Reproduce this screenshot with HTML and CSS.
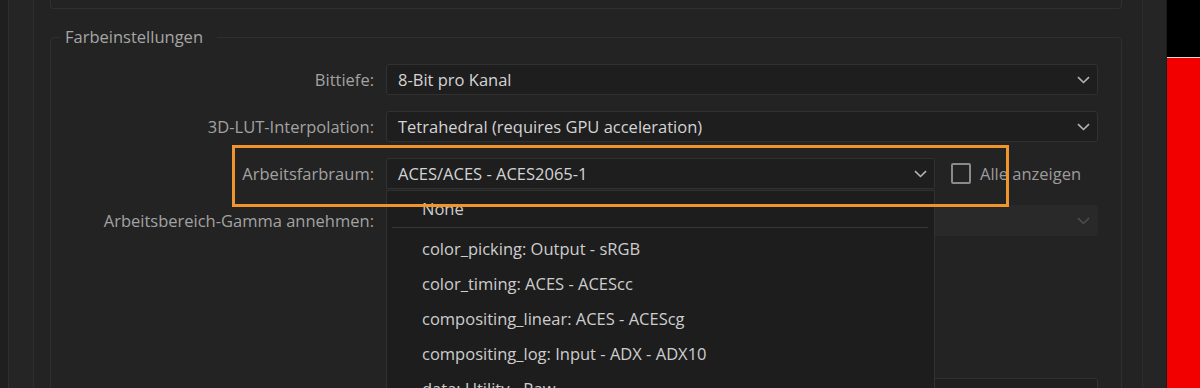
FILE: index.html
```html
<!DOCTYPE html>
<html lang="de">
<head>
<meta charset="utf-8">
<title>Farbeinstellungen</title>
<link rel="stylesheet" href="styles.css">
</head>
<body>
<div class="app">
  <div class="main">
    <div class="panel-outer">
      <div class="panel-inner">
        <div class="topbox"></div>
        <fieldset class="group">
          <legend class="legend">Farbeinstellungen</legend>
          <div class="row row-first">
            <span class="lbl">Bittiefe:</span>
            <div class="select">
              <span class="val">8-Bit pro Kanal</span>
              <svg class="chev" width="13" height="8" viewBox="0 0 13 8"><path d="M1 1.2l5.5 5.3 5.5-5.3" fill="none" stroke="#b4b4b4" stroke-width="1.6"/></svg>
            </div>
          </div>
          <div class="row">
            <span class="lbl">3D-LUT-Interpolation:</span>
            <div class="select">
              <span class="val">Tetrahedral (requires GPU acceleration)</span>
              <svg class="chev" width="13" height="8" viewBox="0 0 13 8"><path d="M1 1.2l5.5 5.3 5.5-5.3" fill="none" stroke="#b4b4b4" stroke-width="1.6"/></svg>
            </div>
          </div>
          <div class="row row-active">
            <span class="lbl">Arbeitsfarbraum:</span>
            <div class="ctrl">
              <div class="select select-open">
                <span class="val">ACES/ACES - ACES2065-1</span>
                <svg class="chev" width="13" height="8" viewBox="0 0 13 8"><path d="M1 1.2l5.5 5.3 5.5-5.3" fill="none" stroke="#b4b4b4" stroke-width="1.6"/></svg>
                <ul class="menu">
                  <li class="item">None</li>
                  <li class="sep"></li>
                  <li class="item">color_picking: Output - sRGB</li>
                  <li class="item">color_timing: ACES - ACEScc</li>
                  <li class="item">compositing_linear: ACES - ACEScg</li>
                  <li class="item">compositing_log: Input - ADX - ADX10</li>
                  <li class="item">data: Utility - Raw</li>
                </ul>
              </div>
              <label class="check"><span class="box"></span><span class="check-text">Alle anzeigen</span></label>
            </div>
            <div class="highlight"></div>
          </div>
          <div class="row">
            <span class="lbl">Arbeitsbereich-Gamma annehmen:</span>
            <div class="select select-disabled">
              <span class="val"></span>
              <svg class="chev" width="13" height="8" viewBox="0 0 13 8"><path d="M1 1.2l5.5 5.3 5.5-5.3" fill="none" stroke="#4c4c4c" stroke-width="1.6"/></svg>
            </div>
          </div>
          <div class="row row-last">
            <span class="lbl">Eingabe-Farbraum:</span>
            <div class="select">
              <span class="val"></span>
            </div>
          </div>
        </fieldset>
      </div>
    </div>
  </div>
  <div class="side">
    <div class="side-black"></div>
    <div class="side-red"></div>
  </div>
</div>
</body>
</html>
```

FILE: styles.css
```css
* { box-sizing: border-box; }
html, body {
  margin: 0;
  padding: 0;
  width: 1200px;
  height: 388px;
  overflow: hidden;
  background: #232323;
  font-family: "Open Sans", "Noto Sans", sans-serif;
  font-size: 16.5px;
}
.app {
  display: flex;
  width: 1200px;
  height: 388px;
  overflow: hidden;
}
.main {
  width: 1167px;
  height: 388px;
  background: #1f1f1f;
  padding-left: 8px;
  display: flex;
}
.panel-outer {
  width: 1159px;
  height: 388px;
  background: #252525;
  border-left: 1px solid #2f2f2f;
  border-right: 1px solid #1b1b1b;
  padding-left: 24px;
  display: flex;
}
.panel-inner {
  width: 1110px;
  height: 388px;
  background: #232323;
  border-left: 1px solid #2e2e2e;
  border-right: 1px solid #2c2c2c;
  padding: 0 20px 0 16px;
  display: flex;
  flex-direction: column;
  overflow: hidden;
}
.topbox {
  height: 9px;
  flex: none;
  border: 1px solid #303030;
  border-top: none;
  border-radius: 0 0 4px 4px;
}
.group {
  margin: 18px 0 0 0;
  padding: 0 23px 0 0;
  border: 1px solid #2f2f2f;
  border-radius: 4px;
  min-width: 0;
  flex: none;
  display: flex;
  flex-direction: column;
  gap: 16px;
}
.legend {
  margin-left: 9px;
  padding: 0 14px 0 5px;
  font-size: 16.5px;
  line-height: 20px;
  color: #a6a6a6;
}
.row {
  position: relative;
  display: grid;
  grid-template-columns: 323px 1fr;
  column-gap: 12px;
  align-items: center;
  height: 31px;
}
.row-first { margin-top: 17px; }
.row-last { margin-top: 126px; }
.lbl {
  text-align: right;
  color: #a2a2a2;
  white-space: nowrap;
}
.select {
  position: relative;
  height: 31px;
  background: #1e1e1e;
  border: 1px solid #313131;
  border-radius: 3px;
  display: flex;
  align-items: center;
  justify-content: space-between;
  padding: 0 7px 0 11px;
  color: #d4d4d4;
}
.select-disabled {
  background: #292929;
  border-color: #292929;
}
.chev { flex: none; }
.ctrl {
  display: flex;
  align-items: center;
}
.select-open {
  width: 549px;
  flex: none;
  border-radius: 3px 3px 0 0;
}
.menu {
  position: absolute;
  top: 31px;
  left: -1px;
  width: 549px;
  height: 200px;
  margin: 0;
  padding: 0;
  list-style: none;
  background: #1d1d1d;
  border: 1px solid #313131;
  overflow: hidden;
  z-index: 2;
}
.item {
  height: 35px;
  line-height: 35px;
  padding-left: 35px;
  color: #cdcdcd;
  white-space: nowrap;
}
.sep {
  height: 1px;
  margin: 1px 6px 3px 5px;
  background: #363636;
}
.check {
  display: flex;
  align-items: center;
  margin-left: 16px;
  color: #9c9c9c;
}
.box {
  width: 20px;
  height: 21px;
  border: 2px solid #8a8a8a;
  border-radius: 2px;
  margin-right: 9px;
}
.highlight {
  position: absolute;
  left: 181px;
  top: -13px;
  width: 777px;
  height: 62px;
  border: 3px solid #f0942c;
  z-index: 3;
  pointer-events: none;
}
.side {
  width: 33px;
  display: flex;
  flex-direction: column;
}
.side-black {
  height: 58px;
  background: #000;
  border-bottom: 1px solid #d8d8d8;
}
.side-red {
  flex: 1;
  background: #f20000;
}
```
